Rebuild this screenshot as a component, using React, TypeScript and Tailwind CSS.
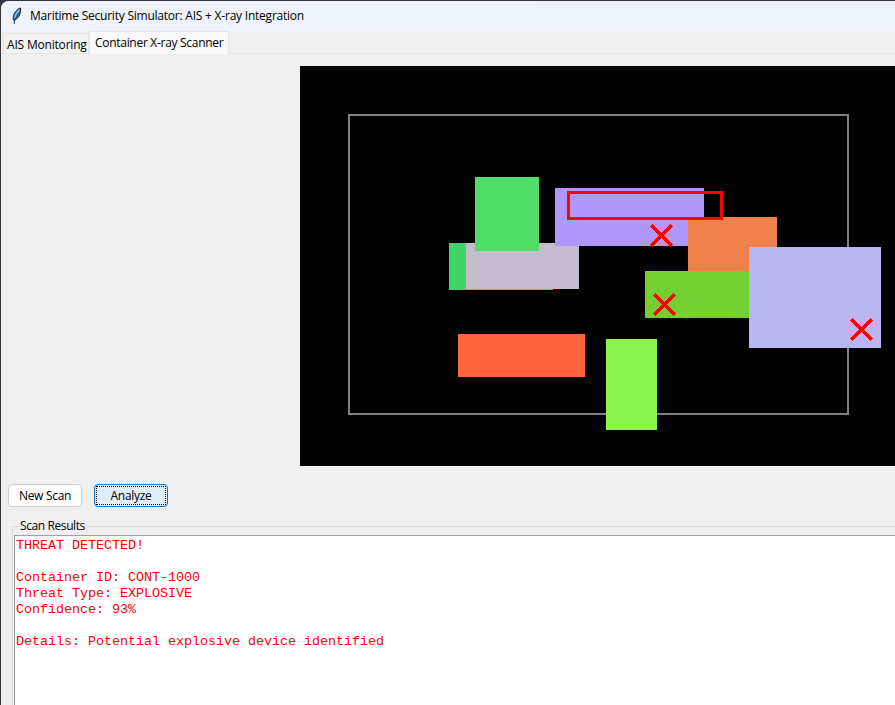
import React from "react";

const ui = "font-['Open_Sans','Noto_Sans',sans-serif] text-[12px] leading-[16px] text-black whitespace-nowrap";

const items = [
  { x: 149, y: 177, w: 104, h: 47, fill: "#3fd467" },
  { x: 166, y: 177, w: 113, h: 46, fill: "#c4bbcc" },
  { x: 175, y: 111, w: 64, h: 74, fill: "#4fdd68" },
  { x: 255, y: 122, w: 149, h: 58, fill: "#b097fb" },
  { x: 388, y: 151, w: 89, h: 60, fill: "#ef824a" },
  { x: 345, y: 205, w: 120, h: 47, fill: "#74d030" },
  { x: 449, y: 181, w: 132, h: 101, fill: "#b9b4f2" },
  { x: 158, y: 268, w: 127, h: 43, fill: "#ff643c" },
  { x: 306, y: 273, w: 51, h: 91, fill: "#8bf44d" },
];

const marks = [
  [361.5, 169.5],
  [364.5, 238.5],
  [561.5, 263.5],
];

function Feather() {
  return (
    <svg width="12" height="18" viewBox="0 0 12 18" className="block">
      <path d="M9.6 1 C5.8 2 2.8 6 2.3 10 C2 12 2.3 13 3.2 13.6 C6 12.3 8.8 9 9.3 5.5 C9.5 4 9.6 2.5 9.6 1Z" fill="#3f8ee0" stroke="#18222e" strokeWidth="1" />
      <path d="M8.2 3 L5 7.5 L3.8 11.5" fill="none" stroke="#8cc6f7" strokeWidth="1.4" />
      <path d="M8 5.5 L4.4 11.5 L3.4 13 L3.2 17" fill="none" stroke="#10151c" strokeWidth="0.8" />
    </svg>
  );
}

function ScanCanvas() {
  return (
    <svg width="595" height="400" viewBox="0 0 595 400" shapeRendering="crispEdges" className="block bg-black">
      <rect x="49" y="49" width="499" height="299" fill="none" stroke="#808080" strokeWidth="2" />
      {items.map((s, i) => (
        <rect key={i} x={s.x} y={s.y} width={s.w} height={s.h} fill={s.fill} />
      ))}
      <rect x="268.5" y="126.5" width="153" height="26" fill="none" stroke="#ff0000" strokeWidth="3" />
      {marks.map(([x, y], i) => (
        <path key={i} d={`M${x - 10.3} ${y - 10.3} l20.6 20.6 M${x + 10.3} ${y - 10.3} l-20.6 20.6`} stroke="#ff0000" strokeWidth="3.2" />
      ))}
    </svg>
  );
}

export default function App() {
  return (
    <div className="w-[895px] h-[705px] overflow-hidden bg-[#38363a] pl-px pt-px">
      <div className="w-[894px] h-[704px] rounded-tl-[8px] overflow-hidden bg-[#f0f0f0] flex flex-col">
        <header className="h-[30px] shrink-0 flex items-center bg-gradient-to-r from-[#eff3fb] to-[#eef2f9] pl-[10px]">
          <Feather />
          <h1 className={`${ui} ml-[7px] tracking-[-0.225px]`}>Maritime Security Simulator: AIS + X-ray Integration</h1>
        </header>

        <nav className="h-[23px] shrink-0 flex items-end border-b border-[#e5e5e5] pl-[2px]">
          <div className="w-[86px] h-[20px] border border-b-0 border-[#e5e5e5] bg-[#f3f3f3] pl-[3px] pt-[3px]">
            <span className={`${ui} block tracking-[-0.19px]`}>AIS Monitoring</span>
          </div>
          <div className="w-[140px] h-[23px] -mb-px border border-b-0 border-[#e5e5e5] bg-[#f9f9f9] pl-[5px] pt-[3px]">
            <span className={`${ui} block tracking-[-0.29px]`}>Container X-ray Scanner</span>
          </div>
        </nav>

        <div className="mt-[12px] ml-[299px] shrink-0">
          <ScanCanvas />
        </div>

        <div className="mt-[18px] ml-[7px] flex gap-[12px] shrink-0">
          <button className={`${ui} w-[74px] h-[23px] rounded-[4px] border border-[#d0d0d0] bg-[#fdfdfd] tracking-[-0.3px]`}>New Scan</button>
          <button className={`${ui} w-[74px] h-[23px] rounded-[4px] border border-[#0078d4] bg-[#e0eef9] p-px tracking-[-0.3px]`}>
            <span className="flex h-full items-center justify-center border border-dotted border-black">Analyze</span>
          </button>
        </div>

        <section className="mt-[11px] ml-[11px] flex-1 flex flex-col min-h-0">
          <div className="h-[16px] shrink-0 flex">
            <div className="w-[7px] mt-[8px] border-t border-l border-[#dcdcdc]" />
            <h2 className={`${ui} w-[67px] pl-px tracking-[-0.4px]`}>Scan Results</h2>
            <div className="flex-1 mt-[8px] border-t border-[#dcdcdc]" />
          </div>
          <div className="flex-1 border-l border-[#dcdcdc] pl-px pt-px">
            <pre className="h-full border-l border-t border-[#a0a0a0] bg-white pl-px pt-[2px] font-['Liberation_Mono',monospace] text-[13.33px] leading-[16px] text-[#ff0000]">
{`THREAT DETECTED!

Container ID: CONT-1000
Threat Type: EXPLOSIVE
Confidence: 93%

Details: Potential explosive device identified`}
            </pre>
          </div>
        </section>
      </div>
    </div>
  );
}
